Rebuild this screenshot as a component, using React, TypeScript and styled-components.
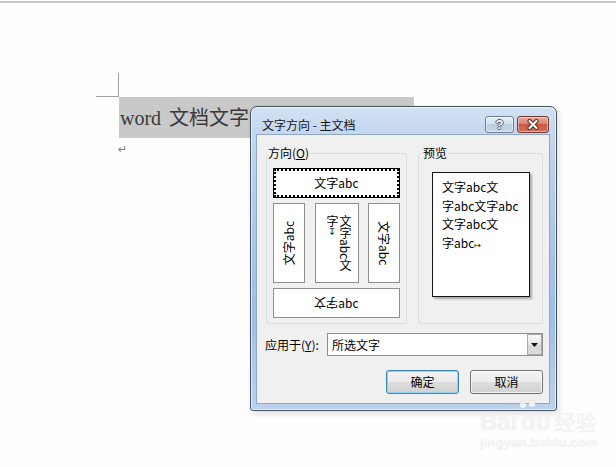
import React from 'react'
import styled, { createGlobalStyle } from 'styled-components'

const UI_FONT = `"Noto Sans CJK SC", "Microsoft YaHei", sans-serif`

const GlobalStyle = createGlobalStyle`
  html, body {
    margin: 0;
    padding: 0;
    background: #fefefe;
  }
  #root {
    width: 616px;
    height: 467px;
  }
`

const Page = styled.div`
  position: relative;
  width: 616px;
  height: 467px;
  overflow: hidden;
  background: #fefefe;
`

/* ---------- word document behind the dialog ---------- */

const TopRule = styled.div`
  height: 2px;
  margin-top: 1px;
  background: #c6c6c6;
`

const DocBody = styled.div`
  padding: 70px 0 0 96px;
`

const CornerMark = styled.div`
  width: 22px;
  height: 23px;
  border-right: 1px solid #a2a2a2;
  border-bottom: 1px solid #a2a2a2;
`

const SelectedLine = styled.div`
  margin-left: 23px;
  width: 295px;
  height: 41px;
  box-sizing: border-box;
  padding-left: 1px;
  background: #c9c9c9;
  font-family: "Liberation Serif", "Noto Sans CJK SC", serif;
  font-size: 20px;
  line-height: 43px;
  word-spacing: 3px;
  color: #3a3a3a;
  white-space: nowrap;
  overflow: hidden;
`

const ReturnMark = styled.div`
  margin: 6px 0 0 22px;
  font-family: "DejaVu Sans", sans-serif;
  font-size: 11px;
  line-height: 11px;
  color: #7a7a7a;
`

/* ---------- dialog window ---------- */

const Dialog = styled.div`
  position: absolute;
  left: 250px;
  top: 106px;
  width: 307px;
  height: 305px;
  box-sizing: border-box;
  display: flex;
  flex-direction: column;
  border: 1px solid #46515e;
  border-radius: 7px 7px 3px 3px;
  background: linear-gradient(180deg, #d3e1f3 0%, #c2d6ef 10%, #a8c5ea 45%, #9fbfe8 70%, #bcd2ee 100%);
  box-shadow: inset 0 0 0 1px rgba(255, 255, 255, 0.6), 2px 3px 6px rgba(0, 0, 0, 0.12);
  font-family: ${UI_FONT};
  font-size: 12px;
  color: #000;
`

const TitleBar = styled.div`
  height: 28px;
  box-sizing: border-box;
  padding: 9px 7px 0 11px;
  display: flex;
  align-items: flex-start;
`

const Title = styled.div`
  flex: 1;
  font-size: 12px;
  line-height: 17px;
  color: #141414;
`

const CaptionButtons = styled.div`
  display: flex;
  gap: 3px;
`

const CaptionButton = styled.div<{ $close?: boolean }>`
  width: ${p => (p.$close ? 32 : 29)}px;
  height: 17px;
  box-sizing: border-box;
  display: flex;
  align-items: center;
  justify-content: center;
  border: 1px solid ${p => (p.$close ? '#6d3a33' : '#6f7f95')};
  border-radius: 3px;
  background: ${p =>
    p.$close
      ? 'linear-gradient(180deg, #e9a99b 0%, #d88270 45%, #c85a44 50%, #d2705a 100%)'
      : 'linear-gradient(180deg, #e6eef7 0%, #d3dfed 45%, #bccde2 50%, #c9d8ea 100%)'};
  box-shadow: inset 0 0 0 1px rgba(255, 255, 255, 0.45);
`

const HelpGlyph = styled.span`
  font-family: "Liberation Sans", sans-serif;
  font-weight: bold;
  font-size: 13px;
  line-height: 13px;
  color: #fff;
  text-shadow: 1px 0 0 #4c5c72, -1px 0 0 #4c5c72, 0 1px 0 #4c5c72, 0 -1px 0 #4c5c72;
`

const Client = styled.div`
  margin: 0 7px 0 6px;
  height: 268px;
  box-sizing: border-box;
  padding: 11px 6px 9px 9px;
  display: flex;
  flex-direction: column;
  background: #f0f0f0;
  box-shadow: 0 0 0 1px #8fa8c8;
`

const GroupsRow = styled.div`
  display: flex;
  gap: 11px;
  height: 178px;
`

const Group = styled.fieldset<{ $width: number }>`
  margin: 0;
  padding: 0;
  width: ${p => p.$width}px;
  height: 178px;
  box-sizing: border-box;
  min-inline-size: 0;
  border: 1px solid #d5dfe5;
  border-radius: 3px;
`

const GroupLabel = styled.legend<{ $indent: number }>`
  margin-left: ${p => p.$indent}px;
  padding: 0 1px;
  font-size: 12px;
  line-height: 14px;
  color: #000;
`

const DirectionBody = styled.div`
  padding: 8px 6px 0;
  display: flex;
  flex-direction: column;
  gap: 5px;
`

const Option = styled.div<{ $selected?: boolean; $width?: number; $height: number }>`
  width: ${p => (p.$width ? `${p.$width}px` : 'auto')};
  height: ${p => p.$height}px;
  box-sizing: border-box;
  display: flex;
  align-items: center;
  justify-content: center;
  background: #fff;
  border: 1px solid ${p => (p.$selected ? '#000' : '#8e8e8e')};
  outline: ${p => (p.$selected ? '2px dotted #000' : 'none')};
  outline-offset: -3px;
  font-size: 12px;
  line-height: 14px;
  white-space: nowrap;
`

const VerticalRow = styled.div`
  display: flex;
  justify-content: space-between;
  height: 80px;
`

const SidewaysText = styled.span<{ $upward?: boolean }>`
  writing-mode: vertical-rl;
  text-orientation: sideways;
  line-height: 14px;
  transform: ${p => (p.$upward ? 'rotate(180deg)' : 'none')};
`

const StackedText = styled.span`
  writing-mode: vertical-rl;
  text-orientation: mixed;
  line-height: 13px;
  margin-left: 4px;
`

const UprightMark = styled.span`
  text-orientation: upright;
  font-family: "DejaVu Sans", sans-serif;
  font-size: 9px;
`

const Flipped = styled.span`
  display: inline-block;
  transform: rotate(180deg);
`

const PreviewBody = styled.div`
  padding: 12px 13px 0;
`

const PreviewPaper = styled.div`
  width: 98px;
  height: 125px;
  box-sizing: border-box;
  padding: 5px 0 0 9px;
  border: 1px solid #151515;
  background: #fff;
  box-shadow: 2px 2px 2px rgba(0, 0, 0, 0.3);
  font-size: 12px;
  line-height: 18.5px;
  white-space: nowrap;
`

const ParaMark = styled.span`
  font-family: "DejaVu Sans", sans-serif;
  font-size: 8px;
`

const ApplyRow = styled.div`
  margin-top: 9px;
  display: flex;
  align-items: center;
  height: 23px;
`

const ApplyLabel = styled.div`
  margin-left: -1px;
  width: 62px;
  line-height: 14px;
`

const Select = styled.div`
  flex: 1;
  height: 23px;
  box-sizing: border-box;
  display: flex;
  align-items: center;
  padding-left: 4px;
  border: 1px solid #8c9097;
  background: #fff;
  line-height: 14px;
`

const SelectArrow = styled.div`
  margin-left: auto;
  width: 15px;
  height: 21px;
  box-sizing: border-box;
  display: flex;
  align-items: center;
  justify-content: center;
  border: 1px solid #a8a8a8;
  background: linear-gradient(180deg, #f7f7f7 0%, #e6e6e6 50%, #d6d6d6 51%, #dcdcdc 100%);
`

const ButtonRow = styled.div`
  margin-top: 14px;
  display: flex;
  justify-content: flex-end;
  gap: 11px;
`

const PushButton = styled.div<{ $default?: boolean }>`
  width: 73px;
  height: 24px;
  box-sizing: border-box;
  display: flex;
  align-items: center;
  justify-content: center;
  border: 1px solid ${p => (p.$default ? '#3a86b4' : '#707070')};
  border-radius: 3px;
  background: linear-gradient(180deg, #f4f4f4 0%, #ebebeb 48%, #dddddd 52%, #d0d0d0 100%);
  box-shadow: inset 0 0 0 1px ${p => (p.$default ? '#92d2f0' : 'rgba(255,255,255,0.7)')};
  font-size: 12px;
  line-height: 14px;
`

/* ---------- baidu watermark overlay ---------- */

const Watermark = styled.div`
  position: absolute;
  left: 480px;
  top: 408px;
  pointer-events: none;
  color: rgba(255, 255, 255, 0.7);
  text-shadow: 0 0 1px rgba(0, 0, 0, 0.14);
  font-family: "Liberation Sans", sans-serif;
  font-weight: bold;
`

const WatermarkBrand = styled.div`
  display: flex;
  align-items: baseline;
  gap: 4px;
  font-size: 24px;
  line-height: 27px;
`

const WatermarkSub = styled.div`
  font-size: 13px;
  line-height: 15px;
  letter-spacing: 0.2px;
`

const CJK = styled.span`
  font-family: ${UI_FONT};
  font-size: 21px;
  font-weight: normal;
`

const Paw = styled.svg`
  position: absolute;
  left: 516px;
  top: 399px;
  pointer-events: none;
`

const CloseIcon = () => (
  <svg width="14" height="11" viewBox="0 0 14 11">
    <path d="M3.5 2 L10.5 9 M10.5 2 L3.5 9" stroke="#5a2219" strokeWidth="4" strokeLinecap="round" />
    <path d="M3.5 2 L10.5 9 M10.5 2 L3.5 9" stroke="#fff" strokeWidth="2.2" strokeLinecap="round" />
  </svg>
)

const DropTriangle = () => (
  <svg width="7" height="4" viewBox="0 0 7 4">
    <path d="M0 0 H7 L3.5 4 Z" fill="#111" />
  </svg>
)

export default function App() {
  return (
    <Page>
      <GlobalStyle />
      <TopRule />
      <DocBody>
        <CornerMark />
        <SelectedLine>word 文档文字</SelectedLine>
        <ReturnMark>↵</ReturnMark>
      </DocBody>

      <Dialog>
        <TitleBar>
          <Title>文字方向 - 主文档</Title>
          <CaptionButtons>
            <CaptionButton>
              <HelpGlyph>?</HelpGlyph>
            </CaptionButton>
            <CaptionButton $close>
              <CloseIcon />
            </CaptionButton>
          </CaptionButtons>
        </TitleBar>

        <Client>
          <GroupsRow>
            <Group $width={141}>
              <GroupLabel $indent={0}>
                方向(<u>O</u>)
              </GroupLabel>
              <DirectionBody>
                <Option $selected $height={30}>文字abc</Option>
                <VerticalRow>
                  <Option $width={32} $height={80}>
                    <SidewaysText $upward>文字abc</SidewaysText>
                  </Option>
                  <Option $width={44} $height={80}>
                    <StackedText>
                      文字abc文
                      <br />字<UprightMark>↧</UprightMark>
                    </StackedText>
                  </Option>
                  <Option $width={32} $height={80}>
                    <SidewaysText>文字abc</SidewaysText>
                  </Option>
                </VerticalRow>
                <Option $height={30}>
                  <Flipped>文</Flipped>
                  <Flipped>字</Flipped>abc
                </Option>
              </DirectionBody>
            </Group>

            <Group $width={125}>
              <GroupLabel $indent={3}>预览</GroupLabel>
              <PreviewBody>
                <PreviewPaper>
                  文字abc文
                  <br />字abc文字abc
                  <br />文字abc文
                  <br />字abc<ParaMark>↦</ParaMark>
                </PreviewPaper>
              </PreviewBody>
            </Group>
          </GroupsRow>

          <ApplyRow>
            <ApplyLabel>
              应用于(<u>Y</u>):
            </ApplyLabel>
            <Select>
              所选文字
              <SelectArrow>
                <DropTriangle />
              </SelectArrow>
            </Select>
          </ApplyRow>

          <ButtonRow>
            <PushButton $default>确定</PushButton>
            <PushButton>取消</PushButton>
          </ButtonRow>
        </Client>
      </Dialog>

      <Paw width="32" height="14" viewBox="0 0 32 14">
        <circle cx="7" cy="6" r="3.5" fill="rgba(255,255,255,0.75)" stroke="rgba(0,0,0,0.08)" />
        <circle cx="16" cy="5" r="3.5" fill="rgba(255,255,255,0.75)" stroke="rgba(0,0,0,0.08)" />
      </Paw>
      <Watermark>
        <WatermarkBrand>
          <span>Bai</span>
          <span>du</span>
          <CJK>经验</CJK>
        </WatermarkBrand>
        <WatermarkSub>jingyan.baidu.com</WatermarkSub>
      </Watermark>
    </Page>
  )
}
